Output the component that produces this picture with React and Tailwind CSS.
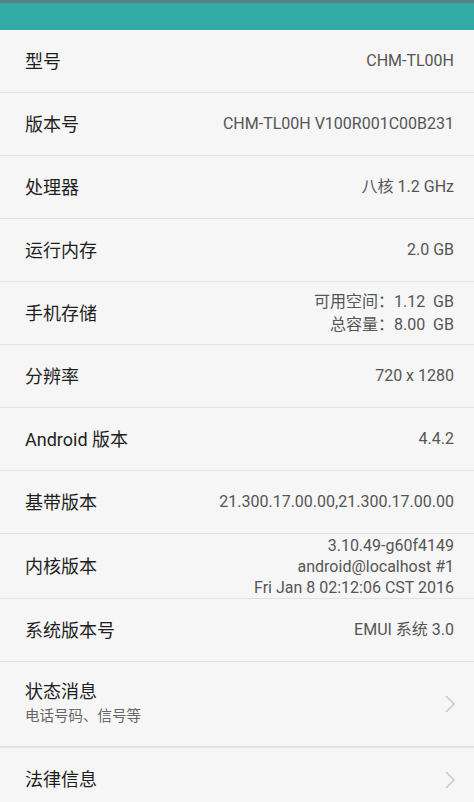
const font = { fontFamily: 'Roboto, "Noto Sans CJK SC", sans-serif' };

const rows = [
  { label: '型号', value: ['CHM-TL00H'] },
  { label: '版本号', value: ['CHM-TL00H V100R001C00B231'] },
  { label: '处理器', value: ['八核 1.2 GHz'] },
  { label: '运行内存', value: ['2.0 GB'] },
  { label: '手机存储', value: ['可用空间：1.12  GB', '总容量：8.00  GB'], lh: 'leading-[23px]' },
  { label: '分辨率', value: ['720 x 1280'] },
  { label: 'Android 版本', value: ['4.4.2'] },
  { label: '基带版本', value: ['21.300.17.00.00,21.300.17.00.00'] },
  { label: '内核版本', value: ['3.10.49-g60f4149', 'android@localhost #1', 'Fri Jan 8 02:12:06 CST 2016'], lh: 'leading-[21px]', h: 'h-[65px]' },
  { label: '系统版本号', value: ['EMUI 系统 3.0'] },
];

function Chevron() {
  return (
    <svg width="12" height="20" viewBox="0 0 12 20" fill="none" stroke="#c4c4c4" strokeWidth="1.4">
      <polyline points="2,2 10,10 2,18" />
    </svg>
  );
}

export default function App() {
  return (
    <div className="w-[474px] h-[802px] overflow-hidden bg-[#f6f6f6]" style={font}>
      <div className="h-[3px] bg-[#5d7f86]" />
      <div className="h-[27px] bg-[#32aaa6]" />

      {rows.map((r) => (
        <div
          key={r.label}
          className={`${r.h || 'h-[63px]'} flex items-center justify-between pl-[25px] pr-[20px] border-b border-[#e2e2e2]`}
        >
          <div className="text-[18px] text-[#1e1e1e]">{r.label}</div>
          <div className={`text-right text-[16px] text-[#555] whitespace-pre ${r.lh || ''}`}>
            {r.value.map((v) => (
              <div key={v}>{v}</div>
            ))}
          </div>
        </div>
      ))}

      <div className="h-[86px] flex items-center justify-between pl-[25px] pr-[18px] border-b-2 border-[#e2e2e2]">
        <div>
          <div className="text-[18px] text-[#1e1e1e] leading-[26px]">状态消息</div>
          <div className="text-[14.5px] text-[#666] leading-[24px]">电话号码、信号等</div>
        </div>
        <Chevron />
      </div>

      <div className="h-[63px] flex items-center justify-between pl-[25px] pr-[18px]">
        <div className="text-[18px] text-[#1e1e1e]">法律信息</div>
        <Chevron />
      </div>
    </div>
  );
}
